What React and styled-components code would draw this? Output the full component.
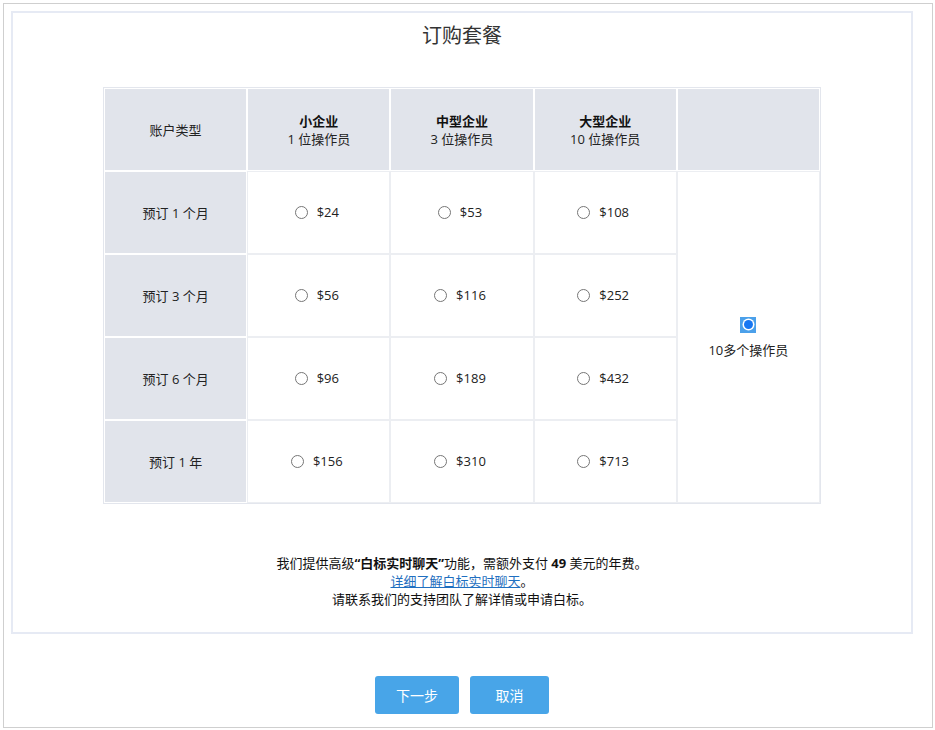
import React from "react";
import styled, { createGlobalStyle } from "styled-components";

const Global = createGlobalStyle`
  html, body { margin: 0; padding: 0; background: #fff; }
  body { font-family: "Open Sans", "Noto Sans CJK SC", sans-serif; font-size: 13px; color: #222; }
`;

const Frame = styled.div`
  margin: 3px;
  border: 1px solid #cfcfcf;
  padding: 7px 0 0 7px;
  box-sizing: border-box;
  width: 930px;
  height: 725px;
  display: flex;
  flex-direction: column;
`;

const Panel = styled.div`
  width: 902px;
  box-sizing: border-box;
  border: 2px solid #e6eaf4;
  padding: 8px 0 24px;
  display: flex;
  flex-direction: column;
  align-items: center;
`;

const Title = styled.h2`
  margin: 0;
  font-size: 20px;
  font-weight: 400;
  line-height: 30px;
  color: #333;
`;

const Table = styled.table`
  margin-top: 36px;
  width: 718px;
  border: 1px solid #e3e6ed;
  border-collapse: separate;
  border-spacing: 0;
  table-layout: fixed;
`;

const Cell = styled.td`
  height: 80px;
  padding: 1px 0 0;
  text-align: center;
  vertical-align: middle;
  font-size: 13px;
  line-height: 18px;
  background: ${(p) => (p.$gray ? "#e1e4eb" : "#fff")};
  border: 1px solid ${(p) => (p.$gray ? "#fff" : "#eceef2")};
`;

const Strong = styled.div`
  font-weight: 700;
  color: #111;
`;

const Option = styled.span`
  display: inline-flex;
  align-items: center;
  gap: 9px;
  color: #222;
  margin-right: 4px;
`;

const Radio = styled.span`
  width: 11px;
  height: 11px;
  border: 1px solid #767676;
  border-radius: 50%;
  background: #fff;
  display: inline-block;
`;

const Checked = styled.span`
  width: 16px;
  height: 16px;
  background: #4ba0ea;
  display: inline-flex;
  align-items: center;
  justify-content: center;
  &::after {
    content: "";
    width: 9px;
    height: 9px;
    border-radius: 50%;
    background: #1877f2;
    box-shadow: 0 0 0 1.5px #fff;
  }
`;

const BigCell = styled.div`
  display: flex;
  flex-direction: column;
  align-items: center;
  gap: 8px;
`;

const Notes = styled.div`
  margin-top: 50px;
  text-align: center;
  font-size: 13px;
  line-height: 18px;
  color: #111;
`;

const Link = styled.a`
  color: #1f6fc0;
  text-decoration: underline;
`;

const Buttons = styled.div`
  width: 902px;
  display: flex;
  justify-content: center;
  gap: 11px;
  margin-top: 42px;
`;

const Button = styled.button`
  height: 38px;
  width: ${(p) => p.$w}px;
  border: none;
  border-radius: 3px;
  background: #48a5e8;
  color: #fff;
  font-family: "Open Sans", "Noto Sans CJK SC", sans-serif;
  font-size: 14px;
  cursor: pointer;
`;

const cols = [
  { name: "小企业", ops: "1 位操作员" },
  { name: "中型企业", ops: "3 位操作员" },
  { name: "大型企业", ops: "10 位操作员" },
];

const rows = [
  { label: "预订 1 个月", prices: ["$24", "$53", "$108"] },
  { label: "预订 3 个月", prices: ["$56", "$116", "$252"] },
  { label: "预订 6 个月", prices: ["$96", "$189", "$432"] },
  { label: "预订 1 年", prices: ["$156", "$310", "$713"] },
];

export default function App() {
  return (
    <>
      <Global />
      <Frame>
        <Panel>
          <Title>订购套餐</Title>
          <Table>
            <tbody>
              <tr>
                <Cell $gray>账户类型</Cell>
                {cols.map((c) => (
                  <Cell $gray key={c.name}>
                    <Strong>{c.name}</Strong>
                    <div>{c.ops}</div>
                  </Cell>
                ))}
                <Cell $gray />
              </tr>
              {rows.map((r, i) => (
                <tr key={r.label}>
                  <Cell $gray>{r.label}</Cell>
                  {r.prices.map((p) => (
                    <Cell key={p}>
                      <Option>
                        <Radio />
                        {p}
                      </Option>
                    </Cell>
                  ))}
                  {i === 0 && (
                    <Cell rowSpan={4}>
                      <BigCell>
                        <Checked />
                        <span>10多个操作员</span>
                      </BigCell>
                    </Cell>
                  )}
                </tr>
              ))}
            </tbody>
          </Table>
          <Notes>
            <div>
              我们提供高级<b>“白标实时聊天”</b>功能，需额外支付 <b>49</b> 美元的年费。
            </div>
            <div>
              <Link href="#">详细了解白标实时聊天</Link>。
            </div>
            <div>请联系我们的支持团队了解详情或申请白标。</div>
          </Notes>
        </Panel>
        <Buttons>
          <Button $w={84}>下一步</Button>
          <Button $w={79}>取消</Button>
        </Buttons>
      </Frame>
    </>
  );
}
